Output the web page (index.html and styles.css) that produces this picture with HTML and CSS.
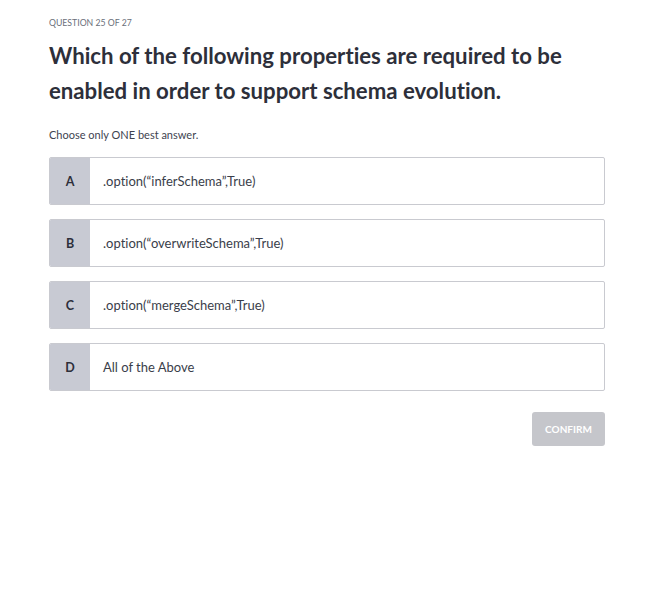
FILE: index.html
```html
<!DOCTYPE html>
<html lang="en">
<head>
<meta charset="utf-8">
<title>Question 25 of 27</title>
<link rel="stylesheet" href="styles.css">
</head>
<body>
<main class="quiz">
  <div class="counter">QUESTION 25 OF 27</div>
  <h1 class="question">Which of the following properties are required to be enabled in order to support schema evolution.</h1>
  <p class="hint">Choose only ONE best answer.</p>
  <ul class="options">
    <li class="option"><span class="letter">A</span><span class="text">.option(“inferSchema”,True)</span></li>
    <li class="option"><span class="letter">B</span><span class="text">.option(“overwriteSchema”,True)</span></li>
    <li class="option"><span class="letter">C</span><span class="text">.option(“mergeSchema”,True)</span></li>
    <li class="option"><span class="letter">D</span><span class="text">All of the Above</span></li>
  </ul>
  <div class="actions"><button class="confirm" disabled>CONFIRM</button></div>
</main>
</body>
</html>
```
FILE: styles.css
```css
* { box-sizing: border-box; }
html, body { margin: 0; padding: 0; background: #fff; }
body { font-family: Lato, "Open Sans", sans-serif; color: #2d2f3a; font-variant-ligatures: none; }
.quiz { width: 556px; margin-left: 49px; padding-top: 17px; }
.counter { font-size: 8.7px; color: #6a6f7a; line-height: 12px; }
.question { font-size: 22.2px; font-weight: 700; line-height: 35px; margin: 9px 0 0; color: #2d2f3a; }
.hint { font-size: 11px; color: #3e4350; margin: 20px 0 0; line-height: 14px; }
.options { list-style: none; margin: 15px 0 0; padding: 0; display: flex; flex-direction: column; gap: 14px; }
.option { display: flex; height: 48px; border: 1px solid #c9cad0; border-radius: 2px; overflow: hidden; }
.letter { width: 40px; background: #c8cad3; display: flex; align-items: center; justify-content: center; font-size: 12.5px; font-weight: 700; color: #2d2f3a; }
.text { display: flex; align-items: center; padding-left: 13px; font-size: 13px; color: #3a3e4a; }
.actions { display: flex; justify-content: flex-end; margin-top: 21px; }
.confirm { width: 73px; height: 34px; border: 0; border-radius: 3px; background: #c5c6cb; color: #fff; font-family: inherit; font-weight: 700; font-size: 10px; }
```
